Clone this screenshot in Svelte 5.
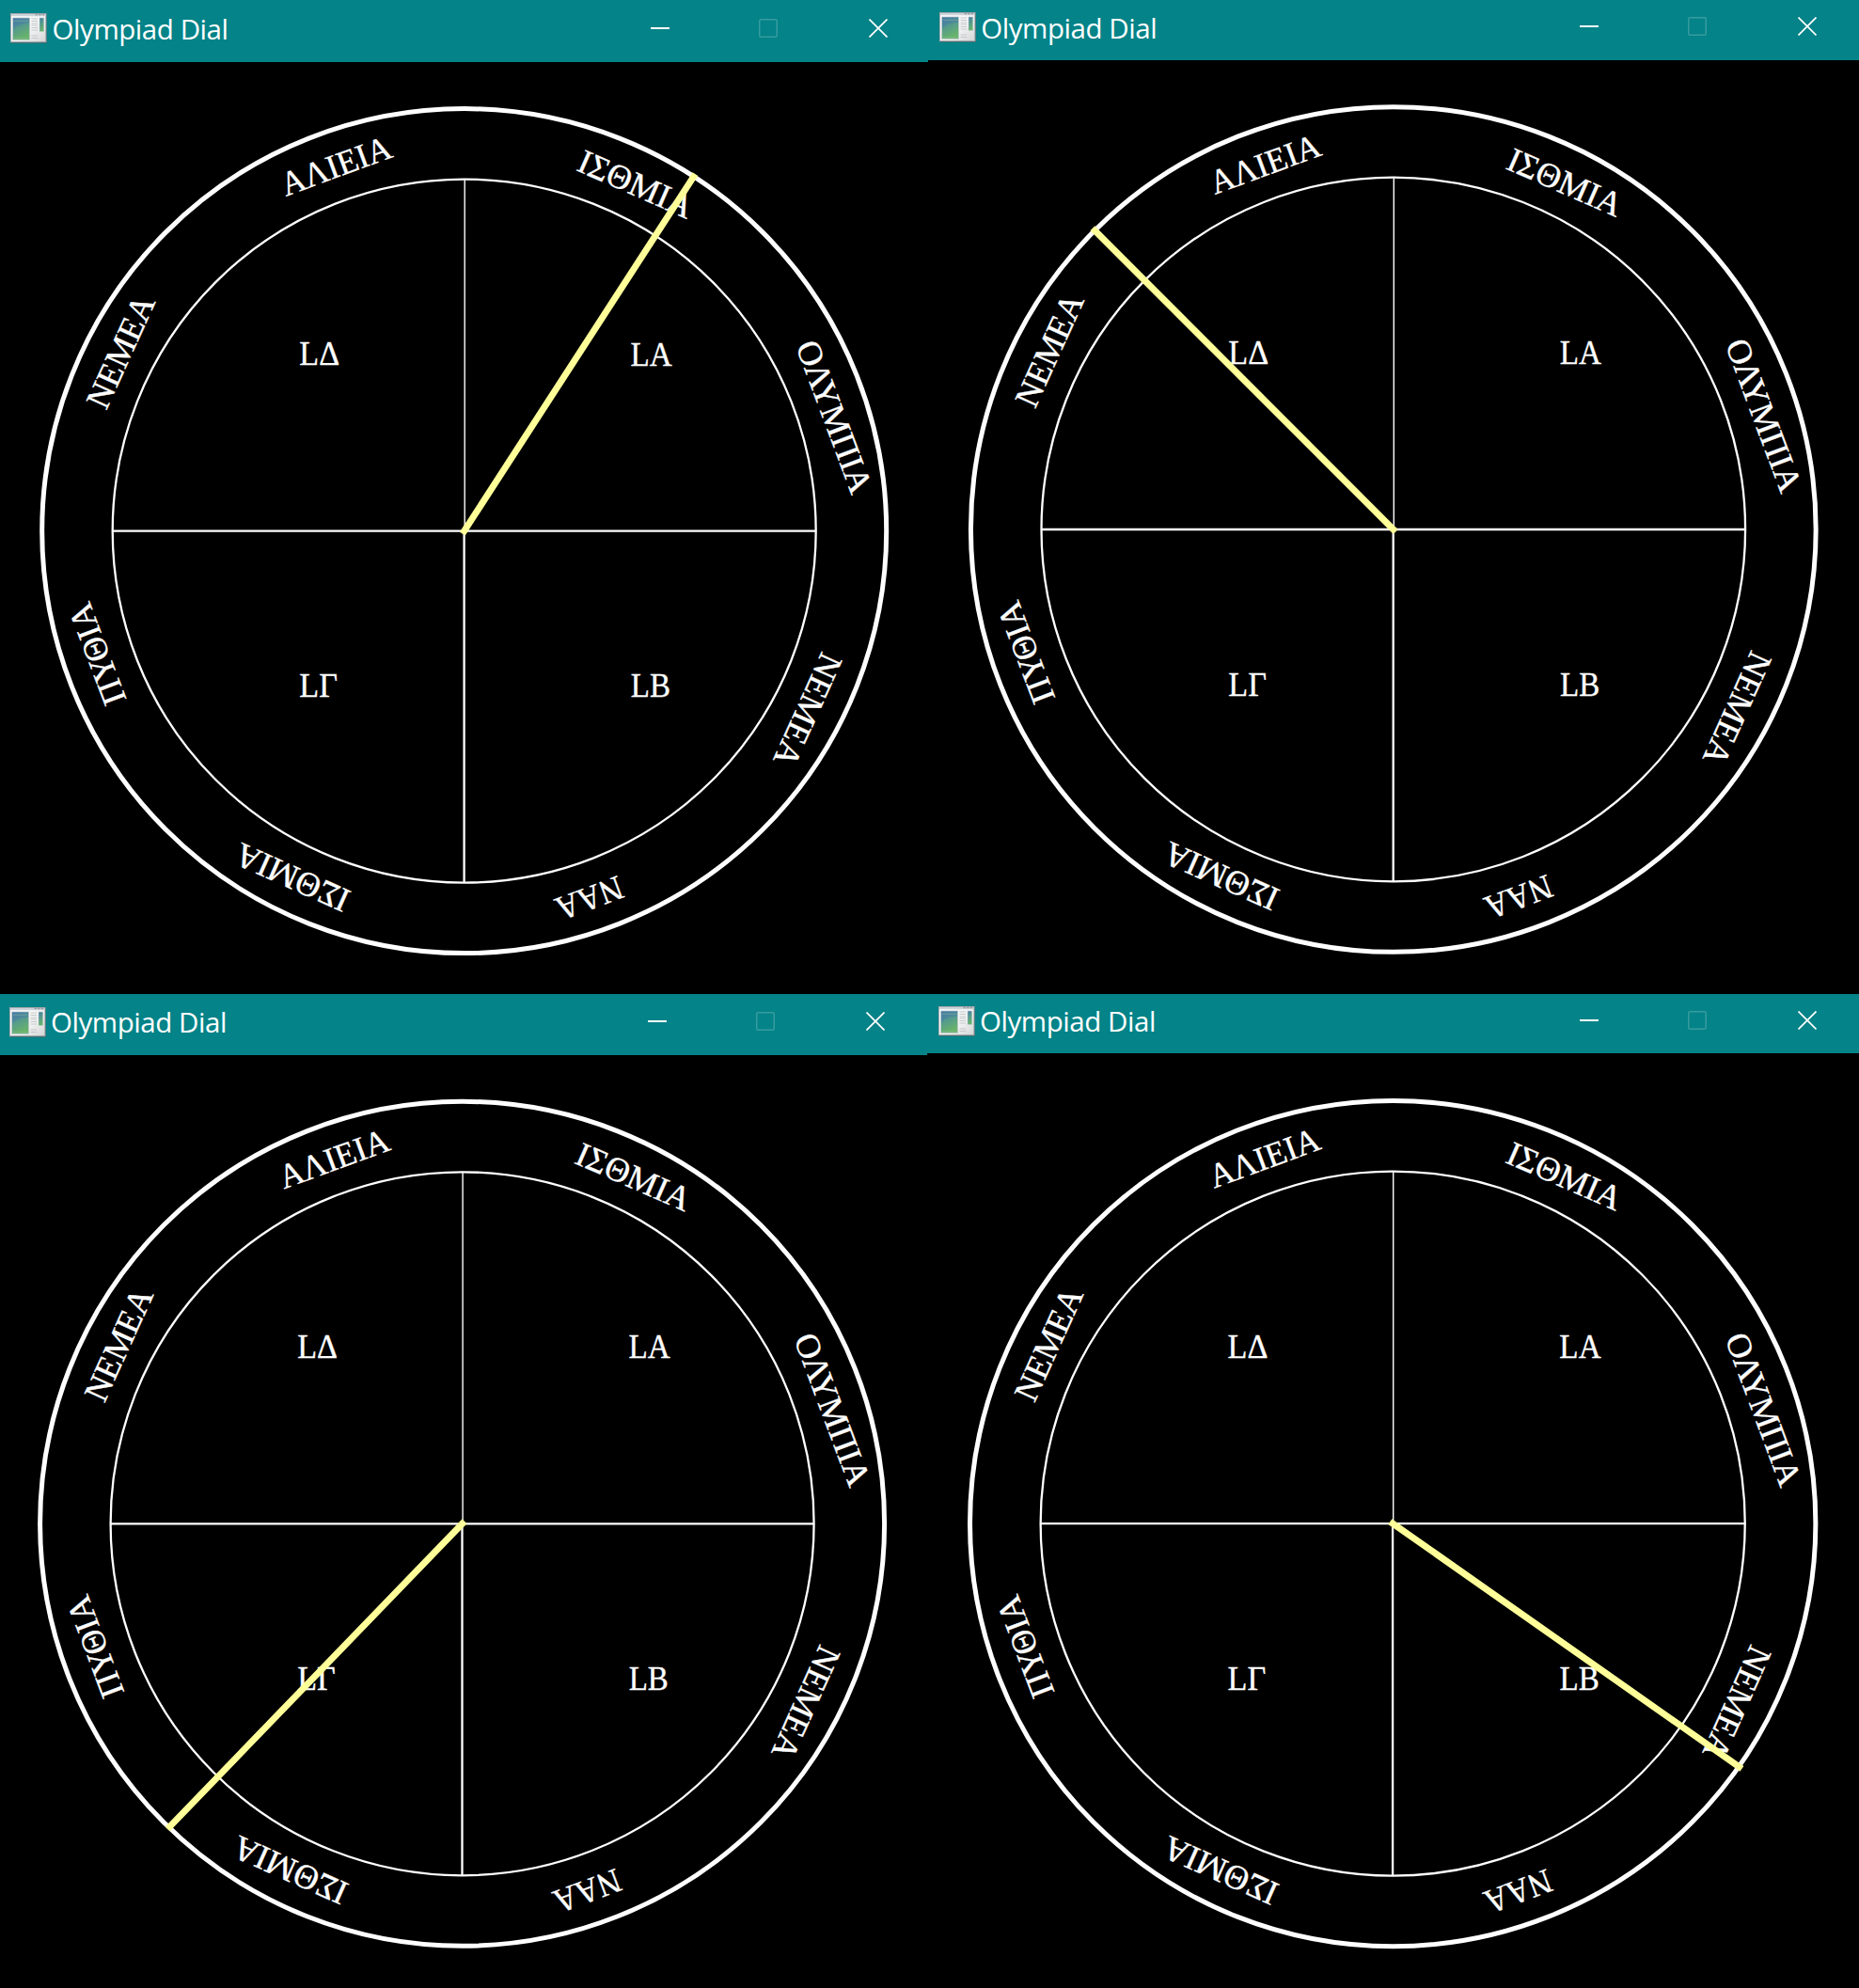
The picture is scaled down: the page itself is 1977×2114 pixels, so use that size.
<script>
  // Each window: outer size, title bar height, dial centre inside the canvas, hand tip.
  const rows = [
    [
      { id: 'a', w: 987, bar: 66, pad: 11.3, right: 43.5, lift: 0, cx: 493.7, cy: 498.6, k: 1, hand: [243.8, -376.6] },
      { id: 'b', w: 990, bar: 64, pad: 12, right: 45.5, lift: 1, cx: 494.8, cy: 499, k: 1.0008, hand: [-317.2, -317.5] }
    ],
    [
      { id: 'c', w: 986, bar: 65, pad: 9.7, right: 45.5, lift: 1, cx: 491.6, cy: 498.3, k: 1, hand: [-311, 322] },
      { id: 'd', w: 991, bar: 63, pad: 11.7, right: 45.5, lift: 1, cx: 495.2, cy: 500.1, k: 1.0015, hand: [367.8, 258.3] }
    ]
  ];
  const rowHeight = 1057;

  // Festival names round the rim: baseline start, rotation and length.
  const games = [
    { t: 'ΙΣΘΜΙΑ', x: 118, y: -383.8, a: 23.7, l: 129.6 },
    { t: 'ΟΛΥΜΠΙΑ', x: 352.4, y: -196.8, a: 69.5, l: 170.5 },
    { t: 'ΝΕΜΕΑ', x: 380.6, y: 127.2, a: 114.2, l: 127.6 },
    { t: 'ΝΑΑ', x: 163.2, y: 366.5, a: 159.4, l: 73.6 },
    { t: 'ΙΣΘΜΙΑ', x: -119, y: 383.8, a: 204.1, l: 129.4 },
    { t: 'ΠΥΘΙΑ', x: -359, y: 179.2, a: 249.3, l: 112.6 },
    { t: 'ΝΕΜΕΑ', x: -380.7, y: -127.5, a: 294.4, l: 127.6 },
    { t: 'ΑΛΙΕΙΑ', x: -189.7, y: -355.7, a: -20.2, l: 122.6 }
  ];

  const years = [
    { t: 'LΑ', x: 176.9, y: -176, l: 44.2 },
    { t: 'LΒ', x: 177.1, y: 176.4, l: 42.2 },
    { t: 'LΓ', x: -175.4, y: 176.4, l: 40.6 },
    { t: 'LΔ', x: -175.4, y: -176.3, l: 42.8 }
  ];
</script>

<main>
  {#each rows as row}
    <div class="row">
      {#each row as win (win.id)}
        <section class="window" style="width:{win.w}px">
          <header class="bar" style="height:{win.bar}px;padding-left:{win.pad}px;padding-right:{win.right}px">
            <svg class="app-icon" viewBox="0 0 39 32">
              <defs>
                <linearGradient id="pane-{win.id}" x1="0" y1="0" x2="0.35" y2="1">
                  <stop offset="0" stop-color="#4878a6" />
                  <stop offset="0.5" stop-color="#559b8d" />
                  <stop offset="1" stop-color="#68b36a" />
                </linearGradient>
                <linearGradient id="frame-{win.id}" x1="0" y1="0" x2="1" y2="1">
                  <stop offset="0" stop-color="#ffffff" />
                  <stop offset="0.6" stop-color="#f1f2f2" />
                  <stop offset="1" stop-color="#d2d4d5" />
                </linearGradient>
              </defs>
              <rect x="0.8" y="0.9" width="38" height="31" fill="#3c5f62" />
              <rect x="0.5" y="0.5" width="37.4" height="30.2" fill="url(#frame-{win.id})" stroke="#a3a9ad" />
              <rect x="1" y="1" width="36.4" height="2.2" fill="#cdd3da" />
              <path d="M26.5 1.5h10.5" stroke="#989da3" stroke-width="1.3" stroke-dasharray="2.6 1" />
              <rect x="2.6" y="5" width="18" height="23.3" fill="url(#pane-{win.id})" stroke="#c0cdd2" stroke-width="0.7" />
              <path d="M3.2 17.5C6 12.5 12 11.5 20 10.5V5.5H3.2z" fill="#4779a6" opacity="0.45" />
              <path d="M3.5 8.2h16M3.5 26.7h16" stroke="#8ec3a0" stroke-width="0.6" opacity="0.8" />
              <path d="M22.5 6h6.5M22.5 8.5h6.5M22.5 11h6.5M22.5 13h6.5M22.5 15.5h6.5M22.5 18h6.5M22.5 24h6.5M22.5 26.5h6.5" stroke="#c5c8ca" stroke-width="1" />
              <rect x="31" y="5" width="4.8" height="14.5" fill="url(#pane-{win.id})" stroke="#c6d2d5" stroke-width="0.5" />
            </svg>
            <h1>Olympiad Dial</h1>
            <div class="controls" style="margin-bottom:{win.lift * 2}px">
              <svg viewBox="0 0 20 20"><path d="M0 10h20" stroke="#fff" stroke-width="2" /></svg>
              <svg viewBox="0 0 20 20"><rect x="0.75" y="0.75" width="18.5" height="18.5" rx="1.5" fill="none" stroke="#379c9f" stroke-width="1.5" /></svg>
              <svg viewBox="0 0 20 20"><path d="M0.5 0.5l19 19M19.5 0.5l-19 19" stroke="#fff" stroke-width="1.7" /></svg>
            </div>
          </header>
          <svg
            class="dial"
            width={win.w}
            height={rowHeight - win.bar}
            viewBox="{-win.cx} {-win.cy} {win.w} {rowHeight - win.bar}"
          >
            <g transform="scale({win.k})">
              <circle r="449" class="outer" />
              <circle r="374" class="inner" />
              <path d="M-374 0H374" class="spoke" />
              <path d="M-0.1 0V374" class="spoke" />
              <path d="M0.5 0V-374" class="spoke thin" />
              {#each years as y}
                <text x={y.x} y={y.y} textLength={y.l} lengthAdjust="spacingAndGlyphs">{y.t}</text>
              {/each}
              {#each games as g}
                <text transform="translate({g.x} {g.y}) rotate({g.a})" textLength={g.l} lengthAdjust="spacingAndGlyphs">{g.t}</text>
              {/each}
              <line x1="0" y1="0" x2={win.hand[0]} y2={win.hand[1]} class="hand" />
            </g>
          </svg>
        </section>
      {/each}
    </div>
  {/each}
</main>

<style>
  :global(body) {
    background: #000;
  }
  main {
    width: 1977px;
    height: 2114px;
    overflow: hidden;
    background: #000;
  }
  .row {
    display: flex;
    height: 1057px;
  }
  .window {
    flex: none;
    overflow: hidden;
    background: #000;
  }
  .bar {
    display: flex;
    align-items: center;
    box-sizing: border-box;
    padding-bottom: 6px;
    background: #048388;
  }
  .app-icon {
    flex: none;
    width: 39px;
    height: 32px;
  }
  h1 {
    margin: 1px 0 0 5.3px;
    font: 400 29.5px/1 'Open Sans', 'Noto Sans', sans-serif;
    letter-spacing: -0.45px;
    white-space: nowrap;
    color: #fff;
  }
  .controls {
    display: flex;
    gap: 96px;
    margin-left: auto;
  }
  .controls svg {
    display: block;
    width: 20px;
    height: 20px;
  }
  .controls svg:nth-child(2) {
    margin: 0 1px 0 -1px;
  }
  .dial {
    display: block;
  }
  .outer,
  .inner,
  .spoke {
    fill: none;
    stroke: #fff;
  }
  .outer {
    stroke-width: 5;
  }
  .inner {
    stroke-width: 2.3;
  }
  .spoke {
    stroke-width: 2.3;
  }
  .thin {
    stroke-width: 1.4;
  }
  .hand {
    stroke: #ffff99;
    stroke-width: 7;
    stroke-linecap: square;
  }
  text {
    font: 36.5px 'Liberation Serif', 'Times New Roman', serif;
    fill: #fff;
    stroke: #fff;
    stroke-width: 0.35;
  }
</style>
